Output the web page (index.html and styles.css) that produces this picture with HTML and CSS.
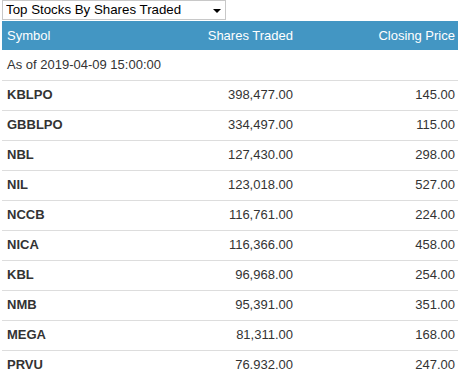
FILE: index.html
```html
<!DOCTYPE html>
<html>
<head>
<meta charset="utf-8">
<link rel="stylesheet" href="styles.css">
</head>
<body>
<div class="picker">
  <select class="picker-select">
    <option>Top Stocks By Shares Traded</option>
  </select>
  <span class="picker-arrow"></span>
</div>
<table class="stocks">
  <thead>
    <tr><th class="c1">Symbol</th><th class="c2">Shares Traded</th><th class="c3">Closing Price</th></tr>
  </thead>
  <tbody>
    <tr><td colspan="3" class="asof">As of 2019-04-09 15:00:00</td></tr>
    <tr><td class="sym">KBLPO</td><td class="num">398,477.00</td><td class="num">145.00</td></tr>
    <tr><td class="sym">GBBLPO</td><td class="num">334,497.00</td><td class="num">115.00</td></tr>
    <tr><td class="sym">NBL</td><td class="num">127,430.00</td><td class="num">298.00</td></tr>
    <tr><td class="sym">NIL</td><td class="num">123,018.00</td><td class="num">527.00</td></tr>
    <tr><td class="sym">NCCB</td><td class="num">116,761.00</td><td class="num">224.00</td></tr>
    <tr><td class="sym">NICA</td><td class="num">116,366.00</td><td class="num">458.00</td></tr>
    <tr><td class="sym">KBL</td><td class="num">96,968.00</td><td class="num">254.00</td></tr>
    <tr><td class="sym">NMB</td><td class="num">95,391.00</td><td class="num">351.00</td></tr>
    <tr><td class="sym">MEGA</td><td class="num">81,311.00</td><td class="num">168.00</td></tr>
    <tr><td class="sym">PRVU</td><td class="num">76,932.00</td><td class="num">247.00</td></tr>
  </tbody>
</table>
</body>
</html>
```
FILE: styles.css
```css
html, body { margin: 0; padding: 0; background: #fff; }
body {
  font-family: "Liberation Sans", Arial, sans-serif;
  font-size: 13px;
  color: #333;
  padding: 0 3px 0 2px;
}
.picker {
  position: relative;
  width: 224px;
  height: 20px;
  margin: 0 0 1px 0;
}
.picker-select {
  appearance: none;
  -webkit-appearance: none;
  box-sizing: border-box;
  width: 100%;
  height: 20px;
  margin: 0;
  padding: 0 0 0 3px;
  border: 1px solid #c8c8c8;
  border-radius: 0;
  background: #fff;
  font-family: "Liberation Sans", Arial, sans-serif;
  font-size: 13.3px;
  color: #000;
  line-height: 18px;
}
.picker-arrow {
  position: absolute;
  right: 5px;
  top: 9px;
  width: 0;
  height: 0;
  border-left: 4px solid transparent;
  border-right: 4px solid transparent;
  border-top: 4px solid #000;
  pointer-events: none;
}
.stocks {
  width: 456px;
  border-collapse: collapse;
  table-layout: fixed;
}
.stocks th,
.stocks td {
  box-sizing: border-box;
}
.stocks th {
  background: #4396c3;
  color: #fff;
  font-weight: normal;
  height: 29px;
  padding: 0 3px 0 5px;
  font-size: 13px;
}
.stocks .c1 { text-align: left; width: 140px; }
.stocks .c2 { text-align: right; width: 156px; padding-right: 5px; }
.stocks .c3 { text-align: right; }
.stocks td {
  height: 30px;
  padding: 0 3px 1px 5px;
  border-bottom: 1px solid #ddd;
  line-height: 15px;
}
.stocks td.num { text-align: right; }
.stocks td.num:nth-child(2) { padding-right: 5px; }
.stocks td.sym { font-weight: bold; }
```
